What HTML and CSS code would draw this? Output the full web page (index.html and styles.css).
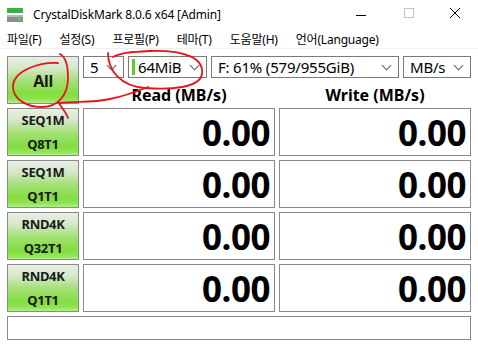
FILE: index.html
```html
<!DOCTYPE html>
<html lang="ko">
<head>
    <meta charset="UTF-8">
    <title>CrystalDiskMark 8.0.6 x64 [Admin]</title>
    <link rel="stylesheet" href="styles.css">
</head>
<body>
    <div class="window">
        <div class="titlebar">
            <svg class="app-icon" width="16" height="16" viewBox="0 0 16 16">
                <rect x="0" y="1" width="16" height="5" fill="#3fae4a"/>
                <rect x="0" y="8" width="16" height="7" fill="#8a8f8c"/>
                <rect x="0" y="8" width="16" height="2" fill="#b5b9b6"/>
                <rect x="11" y="11" width="3" height="2" fill="#5fd05a"/>
            </svg>
            <span class="title">CrystalDiskMark 8.0.6 x64 [Admin]</span>
            <div class="controls">
                <svg width="46" height="30" viewBox="0 0 46 30"><path d="M16 15.5h10" stroke="#000" stroke-width="1"/></svg>
                <svg width="46" height="30" viewBox="0 0 46 30"><rect x="18.5" y="8.5" width="9" height="9" fill="none" stroke="#c4c4c4"/></svg>
                <svg width="46" height="30" viewBox="0 0 46 30"><path d="M18 8l10 10M28 8l-10 10" stroke="#000" stroke-width="1"/></svg>
            </div>
        </div>
        <div class="menubar">
            <span class="menu-item">파일(F)</span>
            <span class="menu-item">설정(S)</span>
            <span class="menu-item">프로필(P)</span>
            <span class="menu-item">테마(T)</span>
            <span class="menu-item">도움말(H)</span>
            <span class="menu-item">언어(Language)</span>
        </div>
        <div class="main">
            <div class="test-btn btn-all">All</div>
            <div class="top-right">
                <div class="selects">
                    <div class="select w-count"><span>5</span><i class="chev"></i></div>
                    <div class="select w-size"><b class="size-bar"></b><span>64MiB</span><i class="chev"></i></div>
                    <div class="select w-drive"><span>F: 61% (579/955GiB)</span><i class="chev"></i></div>
                    <div class="select w-unit"><span>MB/s</span><i class="chev"></i></div>
                </div>
                <div class="headers">
                    <div class="head">Read (MB/s)</div>
                    <div class="head">Write (MB/s)</div>
                </div>
            </div>

            <div class="test-btn">SEQ1M<br>Q8T1</div>
            <div class="result">0.00</div>
            <div class="result">0.00</div>

            <div class="test-btn">SEQ1M<br>Q1T1</div>
            <div class="result">0.00</div>
            <div class="result">0.00</div>

            <div class="test-btn">RND4K<br>Q32T1</div>
            <div class="result">0.00</div>
            <div class="result">0.00</div>

            <div class="test-btn">RND4K<br>Q1T1</div>
            <div class="result">0.00</div>
            <div class="result">0.00</div>

            <div class="status"></div>
        </div>

        <!-- hand-drawn red marks over the screenshot -->
        <svg class="marks" width="478" height="346" viewBox="0 0 478 346">
            <g fill="none" stroke="#e8141c" stroke-width="1.8" stroke-linecap="round">
                <path d="M58 63 C 40 62, 15 70, 13 85 C 12 100, 28 107, 42 107 C 58 107, 68 95, 68 78 C 68 65, 66 57, 60 54"/>
                <path d="M58 102 C 62 108, 66 112, 68 118"/>
                <path d="M59 103 C 75 101, 92 103, 110 99 C 125 96, 138 91, 148 87"/>
                <path d="M108 53 C 108 70, 120 86, 145 88 C 170 90, 200 88, 202 74 C 204 58, 185 50, 150 51 C 130 52, 120 53, 113 57"/>
            </g>
        </svg>
    </div>
</body>
</html>
```

FILE: styles.css
```css
html * {
    padding: 0;
    margin: 0;
    box-sizing: border-box;
}

body {
    background: #fff;
    font-family: "Noto Sans", "Noto Sans CJK KR", sans-serif;
    color: #000;
}

.window {
    position: relative;
    width: 478px;
    height: 346px;
    overflow: hidden;
}

.titlebar {
    height: 30px;
    display: flex;
    align-items: center;
}

.app-icon {
    margin: 0 10px 0 7px;
}

.title {
    font-size: 12px;
    letter-spacing: -0.15px;
    padding-bottom: 2px;
}

.controls {
    margin-left: auto;
    display: flex;
    align-self: flex-start;
}

.menubar {
    height: 19px;
    display: flex;
    align-items: center;
    padding-left: 7px;
    border-bottom: 1px solid #f0f0f0;
    font-size: 12px;
    letter-spacing: -0.2px;
}

.menu-item {
    margin-right: 18px;
}

.main {
    display: grid;
    grid-template-columns: 72px 192px 192px;
    grid-template-rows: repeat(5, 48px) 24px;
    gap: 4px;
    padding: 7px 0 0 7px;
}

.test-btn {
    border: 1px solid #8a8a8a;
    background: linear-gradient(#e8eee4 0%, #d4e8c8 25%, #a6e07a 50%, #82de3e 80%, #8ee452 92%, #b4ee8a 100%);
    display: flex;
    flex-direction: column;
    align-items: center;
    justify-content: center;
    font-weight: bold;
    font-size: 13px;
    line-height: 24px;
    text-align: center;
    color: #1a1a1a;
    letter-spacing: -0.3px;
}

.btn-all {
    font-size: 16px;
    padding-top: 2px;
}

.top-right {
    grid-column: 2 / 4;
    display: flex;
    flex-direction: column;
}

.selects {
    display: flex;
    gap: 4px;
    height: 24px;
}

.select {
    border: 1px solid #7a7a7a;
    display: flex;
    align-items: center;
    padding-left: 6px;
    font-size: 15px;
}

.select span {
    flex: 1;
    letter-spacing: -0.2px;
}

.chev {
    width: 7px;
    height: 7px;
    border-right: 1px solid #606060;
    border-bottom: 1px solid #606060;
    transform: rotate(45deg);
    margin: 0 8px 4px 4px;
}

.w-count { width: 41px; }
.w-size { width: 79px; padding-left: 3px; }
.w-drive { width: 188px; }
.w-unit { width: 68px; }

.size-bar {
    width: 3px;
    height: 16px;
    background: #5ad02c;
    margin-right: 3px;
}

.headers {
    flex: 1;
    display: flex;
    gap: 4px;
}

.head {
    width: 192px;
    text-align: center;
    font-weight: bold;
    font-size: 16px;
    line-height: 28px;
    padding-top: 3px;
}

.result {
    border: 1px solid #8a8a8a;
    font-weight: bold;
    font-size: 35px;
    text-align: right;
    padding: 1px 4px 0 0;
    line-height: 46px;
    letter-spacing: -0.5px;
}

.status {
    grid-column: 1 / 4;
    border: 1px solid #8a8a8a;
}

.marks {
    position: absolute;
    left: 0;
    top: 0;
    pointer-events: none;
}
```
